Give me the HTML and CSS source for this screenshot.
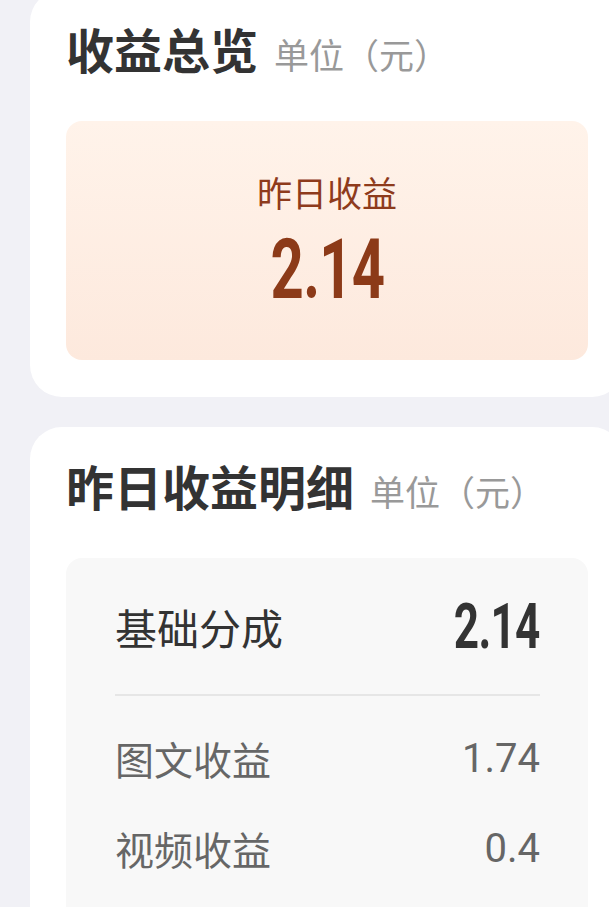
FILE: index.html
```html
<!DOCTYPE html>
<html lang="zh-CN">
<head>
<meta charset="utf-8">
<title>收益</title>
<link rel="stylesheet" href="styles.css">
</head>
<body>
<div class="page">
  <section class="card card-overview">
    <h2 class="card-title">收益总览<span class="unit">单位（元）</span></h2>
    <div class="highlight">
      <div class="highlight-label">昨日收益</div>
      <div class="highlight-value"><span class="num num-big">2.14</span></div>
    </div>
  </section>
  <section class="card card-detail">
    <h2 class="card-title">昨日收益明细<span class="unit">单位（元）</span></h2>
    <div class="detail">
      <div class="row row-main">
        <span class="row-label">基础分成</span>
        <span class="num num-mid">2.14</span>
      </div>
      <div class="divider"></div>
      <div class="row row-sub">
        <span class="row-label">图文收益</span>
        <span class="row-value">1.74</span>
      </div>
      <div class="row row-sub">
        <span class="row-label">视频收益</span>
        <span class="row-value">0.4</span>
      </div>
    </div>
  </section>
</div>
</body>
</html>
```

FILE: styles.css
```css
html, body {
  margin: 0;
  padding: 0;
  overflow: hidden;
  background: #f1f1f6;
}
body {
  width: 609px;
  height: 907px;
  font-family: "Noto Sans CJK SC", "Noto Sans", sans-serif;
  color: #333;
}
.page {
  width: 624px;
  padding-left: 30px;
  box-sizing: border-box;
  display: flex;
  flex-direction: column;
  gap: 30px;
}
.card {
  background: #fff;
  border-radius: 32px;
  padding: 34px 36px 37px;
}
.card-overview {
  margin-top: -10px;
}
.card-title {
  margin: 0;
  font-size: 48px;
  line-height: 48px;
  height: 48px;
  font-weight: 700;
  color: #333;
  display: flex;
  align-items: baseline;
  white-space: nowrap;
}
.unit {
  font-size: 35px;
  line-height: 35px;
  font-weight: 400;
  color: #999;
  margin-left: 16px;
}
.highlight {
  margin-top: 49px;
  height: 239px;
  box-sizing: border-box;
  padding-top: 49px;
  border-radius: 16px;
  background: linear-gradient(180deg, #fff3ea 0%, #fde9dd 100%);
  display: flex;
  flex-direction: column;
  align-items: center;
}
.highlight-label {
  font-size: 35px;
  line-height: 44px;
  color: #8e3b1c;
}
.highlight-value {
  margin-top: 14px;
  line-height: 84px;
  height: 84px;
}
.num {
  font-family: Roboto, "Liberation Sans", sans-serif;
  font-weight: 700;
  display: inline-block;
}
.num-big {
  font-size: 84px;
  line-height: 84px;
  color: #8c3a18;
  transform: scaleX(0.69);
  transform-origin: center center;
  letter-spacing: -1px;
}
.detail {
  margin-top: 49px;
  background: #f8f8f8;
  border-radius: 16px;
  padding: 30px 48px 40px 49px;
  height: 400px;
}
.row {
  display: flex;
  justify-content: space-between;
  align-items: center;
}
.row-main {
  height: 76px;
}
.row-main .row-label {
  font-size: 42px;
  color: #333;
}
.num-mid {
  font-size: 63px;
  line-height: 63px;
  color: #333;
  transform: scaleX(0.7);
  transform-origin: right center;
  letter-spacing: -1px;
}
.divider {
  height: 2px;
  background: #e6e6e6;
  margin-top: 30px;
  margin-bottom: 17px;
}
.row-sub {
  height: 90px;
}
.row-sub .row-label {
  font-size: 39px;
  color: #666;
}
.row-value {
  font-family: Roboto, "Liberation Sans", sans-serif;
  font-size: 40px;
  color: #666;
}
```
